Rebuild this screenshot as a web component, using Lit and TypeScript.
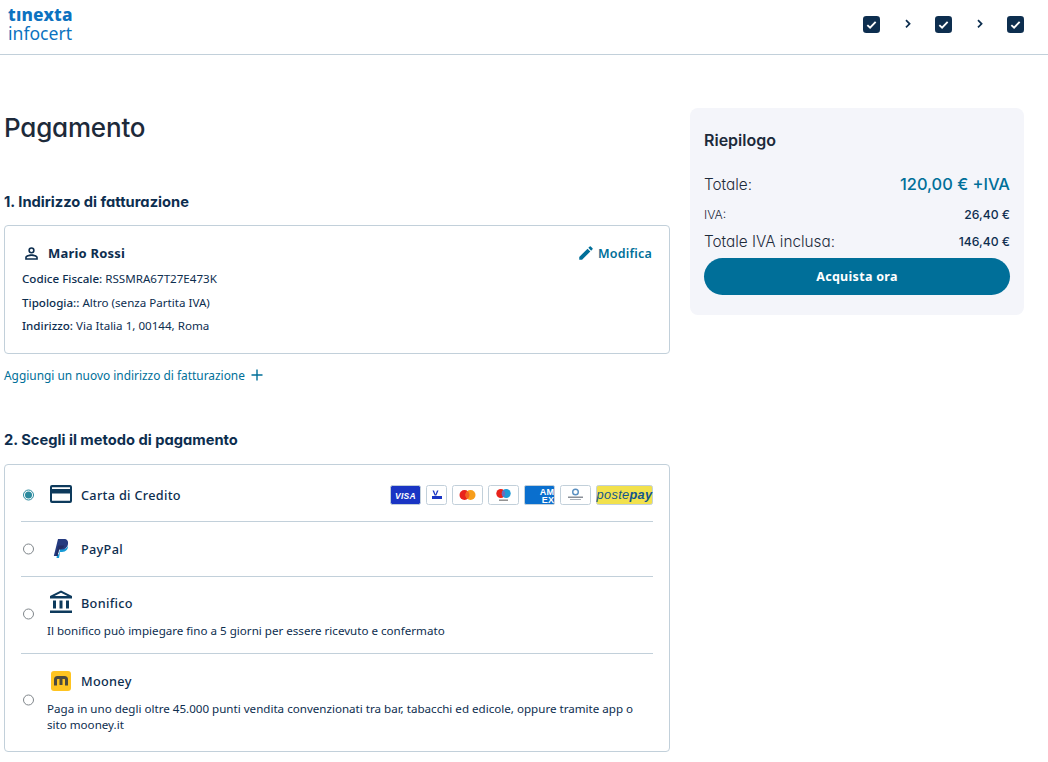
import { LitElement, html, css } from "lit";
import { customElement } from "lit/decorators.js";

const check = html`<svg class="chk" viewBox="0 0 18 18" width="17" height="17"><rect width="18" height="18" rx="3.500" fill="#0d2e4f"/><path d="M4.600 9.600l2.900 2.700 5.900-6" fill="none" stroke="#fff" stroke-width="2"/></svg>`;
const chev = html`<svg class="chev" viewBox="0 0 8 10" width="8" height="10"><path d="M2 1.200l3.600 3.600L2 8.400" fill="none" stroke="#0d2e4f" stroke-width="1.700"/></svg>`;

@customElement("app-root")
export class AppRoot extends LitElement {
  static styles = css`
    :host { display: block; font-family: "Noto Sans", sans-serif; color: #0d2e4f; background: #fff; height: 762px; overflow: hidden; }
    * { box-sizing: border-box; }
    header { height: 55px; border-bottom: 1px solid #c2d0da; display: flex; align-items: flex-start; justify-content: space-between; padding: 0 24px 0 8px; }
    .logo { color: #0c72c0; padding-top: 5px; display: flex; flex-direction: column; }
    .logo b { font: 800 17.300px/20px "Noto Sans", sans-serif; letter-spacing: 0.2px; }
    .logo span { font: 400 17.600px/16px "Noto Sans", sans-serif; }
    .steps { display: flex; align-items: center; gap: 23.500px; padding-top: 16px; }
    .chk, .chev { display: block; }
    .chev { margin-top: -2px; }
    .page { display: grid; grid-template-columns: 666px 334px; column-gap: 20px; padding: 53px 0 0 4px; }
    h1, h2, aside h3, .sum { font-family: Inter, sans-serif; font-feature-settings: "cv11" 1; }
    h1 { font-weight: 500; font-size: 26px; line-height: 38px; color: #1d2a3a; margin: 1px 0 0; letter-spacing: -0.2px; }
    h2 { font-weight: 700; font-size: 14.700px; line-height: 20px; color: #0d2e4f; margin: 0; }
    .h-a { margin-top: 45px; }
    .h-b { margin-top: 46px; }
    .card { border: 1px solid #c2d0da; border-radius: 4px; background: #fff; }
    .addr { margin-top: 13px; height: 129px; padding: 15px 17px 0; }
    .who { display: flex; align-items: center; height: 24px; font-weight: 700; font-size: 13px; letter-spacing: .2px; }
    .who svg { margin-right: 7px; }
    .who .edit { margin-left: auto; display: flex; align-items: center; color: #006f99; font-weight: 600; font-size: 12.500px; }
    .who .edit svg { margin-right: 3px; }
    .line { font-size: 11.600px; line-height: 23.500px; color: #0d2e4f; }
    .line b { font-weight: 500; }
    .who + .line { margin-top: 2px; }
    .add { margin-top: 12px; height: 18px; display: flex; align-items: center; gap: 6px; font-size: 11.900px; color: #006f99; }
    .pay { margin-top: 14px; height: 288px; padding: 0 16px; }
    .row { border-bottom: 1px solid #c2d0da; position: relative; }
    .row:last-child { border-bottom: 0; }
    .r1 { height: 57px; }
    .r2 { height: 55px; }
    .r3 { height: 77px; }
    .r4 { height: 97px; }
    .head { display: flex; align-items: center; height: 54px; padding-left: 28px; font-size: 12.700px; font-weight: 500; letter-spacing: .3px; }
    .r1 .head { height: 56px; padding-top: 3px; }
    .r3 .head { height: 44px; padding-top: 8px; }
    .r4 .head { height: 44px; padding-top: 10px; }
    .ico { width: 24px; height: 24px; margin-right: 8px; display: block; flex: none; }
    .r1 .ico { margin-top: -1px; }
    .r3 .ico { margin-top: -3px; }
    .radio { position: absolute; left: 2px; transform: translateY(-50%); width: 11px; height: 11px; border-radius: 50%; border: 1px solid #80868b; background: #fff; }
    .r1 .radio { top: 29.500px; }
    .r2 .radio { top: 26.500px; }
    .r3 .radio { top: 37px; }
    .r4 .radio { top: 46px; }
    .radio.on { border-color: #2a8a9e; display: flex; align-items: center; justify-content: center; }
    .radio.on::after { content: ""; width: 7px; height: 7px; border-radius: 50%; background: #2a8a9e; }
    .note { margin: 2px 0 0 26px; font-size: 11.600px; line-height: 16px; color: #0d2e4f; }
    .r4 .note { margin: 3px 10px 0 26px; }
    .brands { margin-left: auto; display: flex; align-items: center; gap: 5px; }
    .brands svg { display: block; }
    aside { background: #f4f5fa; border-radius: 8px; height: 207px; padding: 0 14px; }
    aside h3 { font-weight: 600; font-size: 16px; line-height: 20px; color: #1d2a3a; margin: 22px 0 0; }
    .sum { display: flex; justify-content: space-between; align-items: center; color: #1d2a3a; }
    .sum span { font-weight: 300; font-size: 15.300px; }
    .sum b { font-weight: 500; font-size: 12.200px; color: #0d2e4f; }
    .s1 { margin-top: 22px; height: 24px; }
    .sum.s1 b { font-weight: 500; font-size: 16.400px; color: #006f99; }
    .s2 { margin-top: 7px; height: 22px; }
    .sum.s2 span { font-size: 12.200px; }
    .s3 { margin-top: 5px; height: 22px; }
    button { display: block; width: 100%; height: 37px; margin-top: 6px; border: 0; border-radius: 19px; background: #006f99; color: #fff; font: 700 12.500px "Noto Sans", sans-serif; letter-spacing: .3px; }
  `;

  private brands() {
    return html`<div class="brands">
      <svg width="31" height="20" viewBox="0 0 31 20"><rect x=".5" y=".5" width="30" height="19" rx="2" fill="#1a35c4" stroke="#c2d0da"/><text x="15.500" y="13.500" text-anchor="middle" font-family="Liberation Sans" font-style="italic" font-weight="700" font-size="8.500" fill="#fff">VISA</text></svg>
      <svg width="21" height="20" viewBox="0 0 21 20"><rect x=".5" y=".5" width="20" height="19" rx="2" fill="#fff" stroke="#c2d0da"/><rect x="6" y="11" width="10" height="3" fill="#1a35c4"/><path d="M8 5.500l1.500 4 1.500-4h1.500l-2.200 5h-1.600l-2.200-5z" fill="#1a35c4"/></svg>
      <svg width="31" height="20" viewBox="0 0 31 20"><rect x=".5" y=".5" width="30" height="19" rx="2" fill="#fff" stroke="#c2d0da"/><circle cx="12.500" cy="10" r="5" fill="#e8221b"/><circle cx="18.500" cy="10" r="5" fill="#f79e1b"/><path d="M15.500 6a5 5 0 0 1 0 8a5 5 0 0 1 0-8z" fill="#f26122"/></svg>
      <svg width="31" height="20" viewBox="0 0 31 20"><rect x=".5" y=".5" width="30" height="19" rx="2" fill="#fff" stroke="#c2d0da"/><circle cx="12.800" cy="8.500" r="4.500" fill="#e8221b"/><circle cx="18.200" cy="8.500" r="4.500" fill="#1f9ad6"/><path d="M15.500 5a4.500 4.500 0 0 1 0 7a4.500 4.500 0 0 1 0-7z" fill="#6c6bbd"/><rect x="11" y="14.500" width="9" height="1.400" fill="#888"/></svg>
      <svg width="31" height="20" viewBox="0 0 31 20"><rect x=".5" y=".5" width="30" height="19" rx="1.500" fill="#0a6fce" stroke="#c2d0da"/><text x="23" y="10" text-anchor="middle" font-family="Liberation Sans" font-weight="700" font-size="9" fill="#fff">AM</text><text x="24" y="18" text-anchor="middle" font-family="Liberation Sans" font-weight="700" font-size="9" fill="#fff">EX</text></svg>
      <svg width="31" height="20" viewBox="0 0 31 20"><rect x=".5" y=".5" width="30" height="19" rx="2" fill="#fff" stroke="#c2d0da"/><circle cx="15.500" cy="7" r="2.800" fill="none" stroke="#5a8fc0" stroke-width="1.400"/><rect x="8" y="11.500" width="15" height="1.500" fill="#8a8f98"/><rect x="10" y="14" width="11" height="1" fill="#a8adb5"/></svg>
      <svg width="57" height="20" viewBox="0 0 57 20"><rect x=".5" y=".5" width="56" height="19" rx="2" fill="#f2e14c" stroke="#c2d0da"/><text x="28.500" y="14" text-anchor="middle" font-family="Liberation Sans" font-style="italic" font-size="12.800" fill="#12558c">poste<tspan font-weight="700">pay</tspan></text></svg>
    </div>`;
  }

  render() {
    return html`
      <header>
        <div class="logo"><b>tınexta</b><span>infocert</span></div>
        <div class="steps">${check}${chev}${check}${chev}${check}</div>
      </header>
      <div class="page">
        <main>
          <h1>Pagamento</h1>
          <h2 class="h-a">1. Indirizzo di fatturazione</h2>
          <div class="card addr">
            <div class="who">
              <svg width="19" height="19" viewBox="0 0 24 24"><path fill="#0d2e4f" d="M12 6a2 2 0 1 1 0 4 2 2 0 0 1 0-4m0 9c2.700 0 5.800 1.300 6 2v1H6v-1c.2-.7 3.300-2 6-2M12 4a4 4 0 1 0 0 8 4 4 0 0 0 0-8zm0 9c-2.700 0-8 1.300-8 4v3h16v-3c0-2.700-5.300-4-8-4z"/></svg>
              Mario Rossi
              <span class="edit"><svg width="18" height="18" viewBox="0 0 24 24"><path fill="#006f99" d="M3 17.250V21h3.750L17.800 9.940l-3.750-3.750L3 17.250zM20.700 7.040a1 1 0 0 0 0-1.410l-2.340-2.340a1 1 0 0 0-1.410 0l-1.830 1.830 3.750 3.750 1.830-1.830z"/></svg>Modifica</span>
            </div>
            <div class="line"><b>Codice Fiscale:</b> RSSMRA67T27E473K</div>
            <div class="line"><b>Tipologia::</b> Altro (senza Partita IVA)</div>
            <div class="line"><b>Indirizzo:</b> Via Italia 1, 00144, Roma</div>
          </div>
          <div class="add">Aggiungi un nuovo indirizzo di fatturazione <svg width="12" height="12" viewBox="0 0 12 12"><path d="M6 .5v11M.5 6h11" stroke="#006f99" stroke-width="1.400"/></svg></div>
          <h2 class="h-b">2. Scegli il metodo di pagamento</h2>
          <div class="card pay">
            <div class="row r1"><span class="radio on"></span>
              <div class="head"><svg class="ico" viewBox="0 0 24 24"><path fill="#0d3a5c" fill-rule="evenodd" d="M3 3h18a2 2 0 0 1 2 2v14a2 2 0 0 1-2 2H3a2 2 0 0 1-2-2V5a2 2 0 0 1 2-2zm0 2.300v1.700h18V5.300zm0 6.200v7.200h18v-7.200z"/></svg>Carta di Credito${this.brands()}</div>
            </div>
            <div class="row r2"><span class="radio"></span>
              <div class="head"><svg class="ico" viewBox="0 0 24 24"><path fill="#179bd7" d="M19 8c.6 4-2 7-6 7h-2l-1 6H7.500l.5-3 2-1 1-5h3c3 0 5-2 5-4z"/><path fill="#253b80" d="M9 2h6c3 0 4.500 2 4 5-.6 3.500-3 5.500-6.500 5.500H10L8.500 19H4.800z"/><path fill="#222d65" d="M9.300 8.500h6c-1 2.600-3 4-5.800 4H10l-1.500 6.500H6.500z"/></svg>PayPal</div>
            </div>
            <div class="row r3"><span class="radio"></span>
              <div class="head"><svg class="ico" viewBox="0 0 24 24"><path fill="#0d3a5c" d="M12 .5 1 6v2.500h22V6zm0 2.300L18.500 6h-13zM4 10.500h3v8H4zM10.500 10.500h3v8h-3zM17 10.500h3v8h-3zM1 20.500h22v2.500H1z"/></svg>Bonifico</div>
              <p class="note">Il bonifico può impiegare fino a 5 giorni per essere ricevuto e confermato</p>
            </div>
            <div class="row r4"><span class="radio"></span>
              <div class="head"><svg class="ico" viewBox="0 0 24 24"><rect x="2" y="2" width="20" height="20" rx="3" fill="#ffc421"/><path d="M6.500 16.500V10.500a2 2 0 0 1 2-2h7a2 2 0 0 1 2 2v6M12 16V9" fill="none" stroke="#4d4a3f" stroke-width="3"/></svg>Mooney</div>
              <p class="note">Paga in uno degli oltre 45.000 punti vendita convenzionati tra bar, tabacchi ed edicole, oppure tramite app o sito mooney.it</p>
            </div>
          </div>
        </main>
        <aside>
          <h3>Riepilogo</h3>
          <div class="sum s1"><span>Totale:</span><b>120,00 € +IVA</b></div>
          <div class="sum s2"><span>IVA:</span><b>26,40 €</b></div>
          <div class="sum s3"><span>Totale IVA inclusa:</span><b>146,40 €</b></div>
          <button>Acquista ora</button>
        </aside>
      </div>
    `;
  }
}
